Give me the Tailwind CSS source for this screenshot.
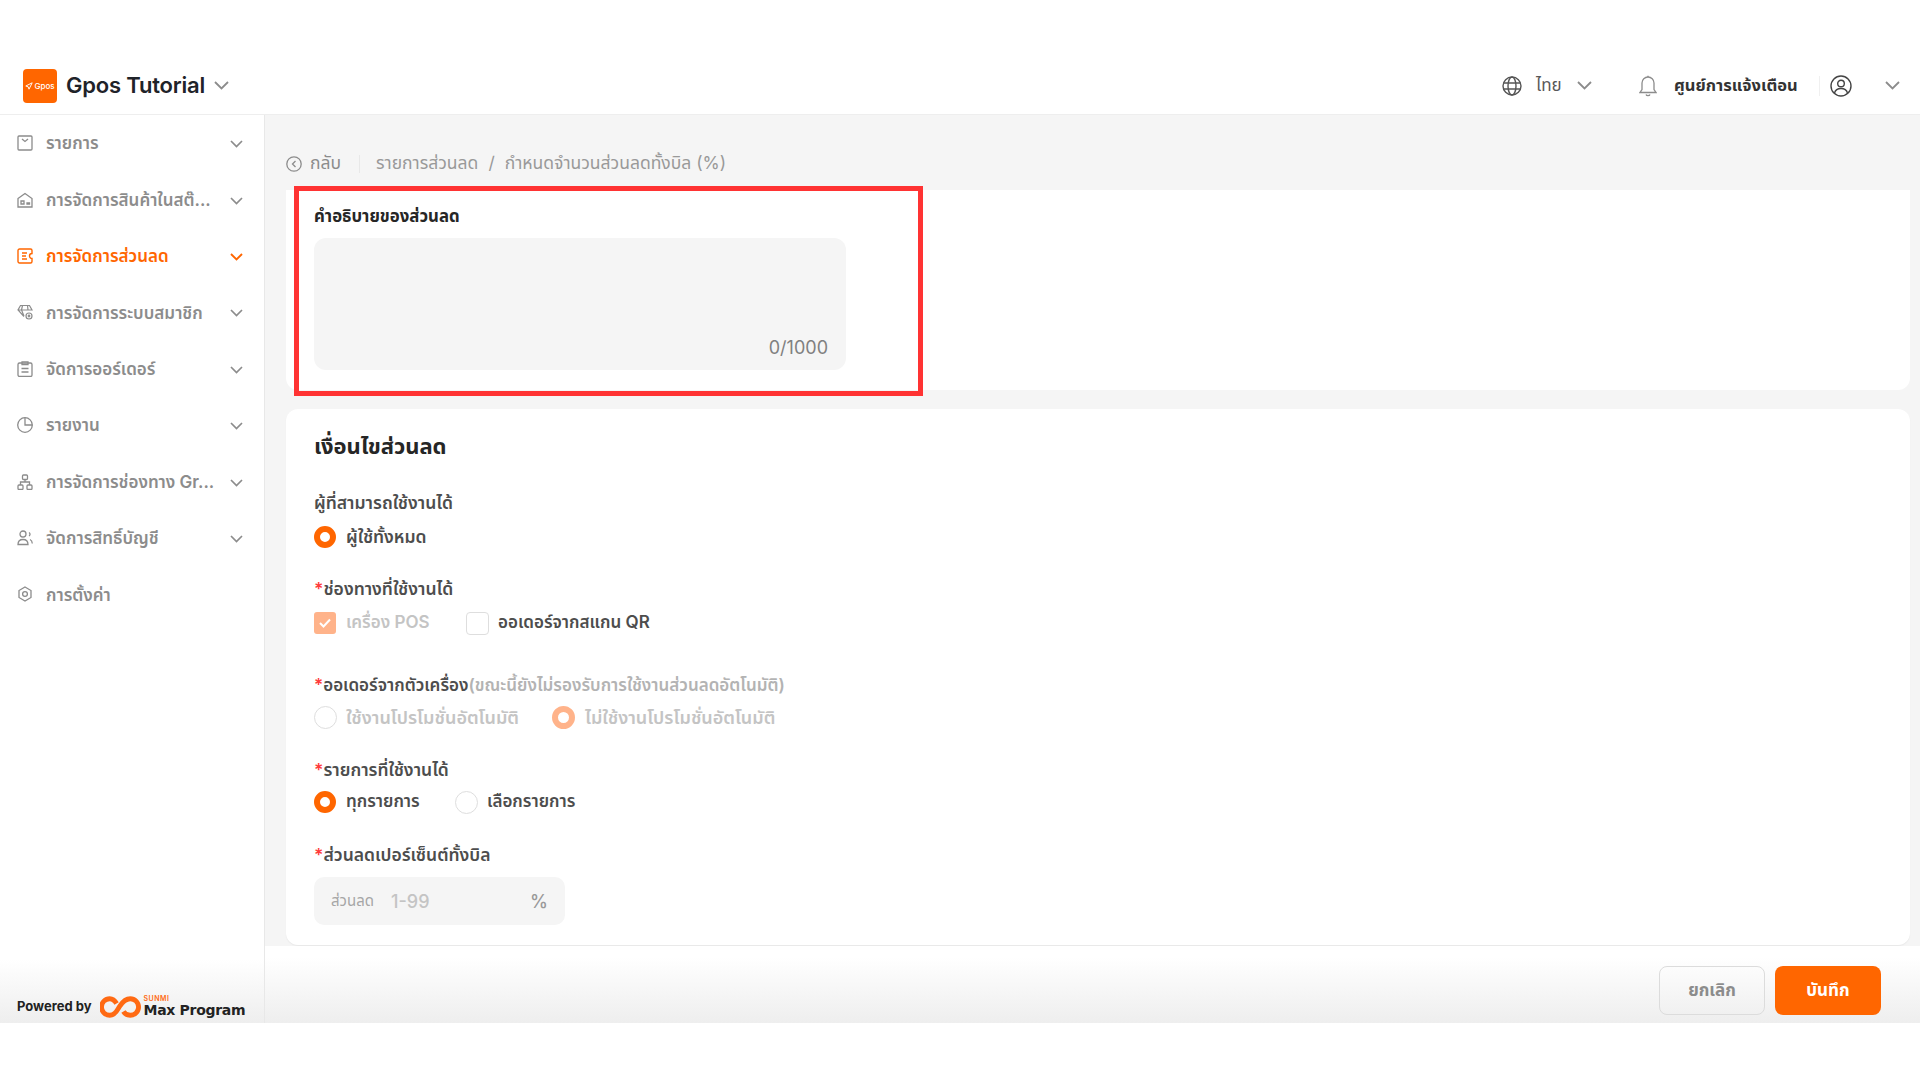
<!DOCTYPE html>
<html lang="th"><head><meta charset="utf-8"><script src="https://cdn.jsdelivr.net/npm/@tailwindcss/browser@4"></script><title>Gpos</title></head>
<body class="bg-white">
<div class="relative w-[1920px] h-[1080px] overflow-hidden bg-white font-['Inter','Noto_Sans','Noto_Sans_Thai',sans-serif] pt-[64px]">
  <!-- header -->
  <header class="h-[51px] flex items-center border-b border-[#eeeeee] pl-[23px] pr-[20px] pb-[7px] bg-white">
    <div class="w-[34px] h-[34px] rounded-[4px] bg-[#ff6600] flex items-center justify-center gap-[1px] text-white text-[8px] font-medium">
      <svg class="w-[8px] h-[8px]" viewBox="0 0 10 10" fill="none" stroke="white" stroke-width="1.2"><path d="M9 1 1 5l3 1 1 3z"/></svg><span>Gpos</span>
    </div>
    <span class="ml-[9px] text-[22px] font-semibold text-[#1f2329] tracking-[-0.2px]">Gpos Tutorial</span>
    <svg class="ml-[9px] w-[15px] h-[9px]" viewBox="0 0 15 9" fill="none" stroke="#8c8c8c" stroke-width="1.8"><path d="m1 1 6.500 6.500L14 1"/></svg>
    <div class="ml-auto flex items-center">
      <svg class="w-[20px] h-[20px]" viewBox="0 0 20 20" fill="none" stroke="#555" stroke-width="1.4"><circle cx="10" cy="10" r="9"/><ellipse cx="10" cy="10" rx="4" ry="9"/><path d="M1.500 7h17M1.500 13h17"/></svg>
      <span class="ml-[14px] text-[17px] text-[#595959] w-[31px] whitespace-nowrap">ไทย</span>
      <svg class="ml-[10px] w-[15px] h-[9px]" viewBox="0 0 15 9" fill="none" stroke="#8c8c8c" stroke-width="1.8"><path d="m1 1 6.500 6.500L14 1"/></svg>
      <svg class="ml-[47px] w-[18px] h-[22px]" viewBox="0 0 18 22" fill="none" stroke="#8c8c8c" stroke-width="1.3"><path d="M1 17.500h16l-2-3V8a6 6 0 0 0-12 0v6.500z"/><path d="M9 .8V2M7 19.500c.5 1.500 3.500 1.500 4 0"/></svg>
      <span class="ml-[17px] text-[16.500px] font-bold text-[#333333] w-[123px] whitespace-nowrap">ศูนย์การแจ้งเตือน</span>
      <span class="ml-[22px] w-px h-[20px] bg-[#f0f0f0]"></span>
      <svg class="ml-[10px] w-[22px] h-[22px]" viewBox="0 0 22 22" fill="none" stroke="#444" stroke-width="1.4"><circle cx="11" cy="11" r="10"/><circle cx="11" cy="8.500" r="3.300"/><path d="M4.500 18c1-3.500 3.500-4.500 6.500-4.500s5.500 1 6.500 4.500"/></svg>
      <svg class="ml-[33px] w-[15px] h-[9px]" viewBox="0 0 15 9" fill="none" stroke="#8c8c8c" stroke-width="1.8"><path d="m1 1 6.500 6.500L14 1"/></svg>
    </div>
  </header>
  <div class="flex h-[908px]">
    <!-- sidebar -->
    <aside class="relative w-[265px] shrink-0 border-r border-[#e8e8e8] bg-gradient-to-b from-white from-[93%] to-[#eeeeee] flex flex-col pt-[1px]">
      <nav class="flex flex-col text-[17px] font-semibold text-[#8c8c8c]">
        <a class="h-[56.400px] flex items-center pl-[17px] pr-[21px]">
          <svg class="w-[16px] h-[16px] mb-[2px]" viewBox="0 0 16 16" fill="none" stroke="currentColor" stroke-width="1.300"><rect x="1" y="1" width="14" height="14" rx="1"/><path d="m5 4 3 2.500L11 4"/></svg>
          <span class="ml-[13px] flex-1 whitespace-nowrap">รายการ</span>
          <svg class="w-[13px] h-[8px]" viewBox="0 0 13 8" fill="none" stroke="currentColor" stroke-width="1.700"><path d="m1 1 5.500 5.500L12 1"/></svg>
        </a>
        <a class="h-[56.400px] flex items-center pl-[17px] pr-[21px]">
          <svg class="w-[16px] h-[16px] mb-[2px]" viewBox="0 0 16 16" fill="none" stroke="currentColor" stroke-width="1.300"><path d="M1 6.500 8 1.500l7 5V15H1z"/><path d="M4 9h3v3H4zM10 11h2.500v1H10z"/></svg>
          <span class="ml-[13px] flex-1 whitespace-nowrap">การจัดการสินค้าในสต๊...</span>
          <svg class="w-[13px] h-[8px]" viewBox="0 0 13 8" fill="none" stroke="currentColor" stroke-width="1.700"><path d="m1 1 5.500 5.500L12 1"/></svg>
        </a>
        <a class="h-[56.400px] flex items-center pl-[17px] pr-[21px] text-[#ff6600]">
          <svg class="w-[16px] h-[16px] mb-[2px]" viewBox="0 0 16 16" fill="none" stroke="currentColor" stroke-width="1.400"><path d="M1 2.500c0-.8.700-1.500 1.500-1.500h11c.8 0 1.500.7 1.500 1.500v3a2.500 2.500 0 0 0 0 5v3c0 .8-.7 1.500-1.500 1.500h-11c-.8 0-1.500-.7-1.500-1.500z"/><path d="M5 5h5M5 8h4M5 11h5"/></svg>
          <span class="ml-[13px] flex-1 whitespace-nowrap">การจัดการส่วนลด</span>
          <svg class="w-[13px] h-[8px]" viewBox="0 0 13 8" fill="none" stroke="currentColor" stroke-width="1.900"><path d="m1 1 5.500 5.500L12 1"/></svg>
        </a>
        <a class="h-[56.400px] flex items-center pl-[17px] pr-[21px]">
          <svg class="w-[16px] h-[16px] mb-[2px]" viewBox="0 0 16 16" fill="none" stroke="currentColor" stroke-width="1.200"><path d="M7 12.500 1 6l2.500-4.500h9L15 6h-4M1 6h10M5.500 1.500 4.500 6 7 12M10.500 1.500 11 6"/><circle cx="12" cy="12" r="3"/><circle cx="12" cy="12" r=".8"/></svg>
          <span class="ml-[13px] flex-1 whitespace-nowrap">การจัดการระบบสมาชิก</span>
          <svg class="w-[13px] h-[8px]" viewBox="0 0 13 8" fill="none" stroke="currentColor" stroke-width="1.700"><path d="m1 1 5.500 5.500L12 1"/></svg>
        </a>
        <a class="h-[56.400px] flex items-center pl-[17px] pr-[21px]">
          <svg class="w-[16px] h-[16px] mb-[2px]" viewBox="0 0 16 16" fill="none" stroke="currentColor" stroke-width="1.300"><rect x="1" y="2" width="14" height="13.500" rx="1.500"/><path d="M5 .8h6V3.500H5zM4.500 7.500h7M4.500 11h7"/></svg>
          <span class="ml-[13px] flex-1 whitespace-nowrap">จัดการออร์เดอร์</span>
          <svg class="w-[13px] h-[8px]" viewBox="0 0 13 8" fill="none" stroke="currentColor" stroke-width="1.700"><path d="m1 1 5.500 5.500L12 1"/></svg>
        </a>
        <a class="h-[56.400px] flex items-center pl-[17px] pr-[21px]">
          <svg class="w-[16px] h-[16px] mb-[2px]" viewBox="0 0 16 16" fill="none" stroke="currentColor" stroke-width="1.300"><circle cx="8" cy="8" r="7.300"/><path d="M8 .7V8h7.300"/></svg>
          <span class="ml-[13px] flex-1 whitespace-nowrap">รายงาน</span>
          <svg class="w-[13px] h-[8px]" viewBox="0 0 13 8" fill="none" stroke="currentColor" stroke-width="1.700"><path d="m1 1 5.500 5.500L12 1"/></svg>
        </a>
        <a class="h-[56.400px] flex items-center pl-[17px] pr-[21px]">
          <svg class="w-[16px] h-[16px] mb-[2px]" viewBox="0 0 16 16" fill="none" stroke="currentColor" stroke-width="1.300"><rect x="5.500" y="1" width="5" height="4.500" rx="1"/><rect x="1" y="11" width="5" height="4.500" rx="1"/><rect x="10" y="11" width="5" height="4.500" rx="1"/><path d="M8 5.500V8M3.500 11V8h9v3"/></svg>
          <span class="ml-[13px] flex-1 whitespace-nowrap">การจัดการช่องทาง Gr...</span>
          <svg class="w-[13px] h-[8px]" viewBox="0 0 13 8" fill="none" stroke="currentColor" stroke-width="1.700"><path d="m1 1 5.500 5.500L12 1"/></svg>
        </a>
        <a class="h-[56.400px] flex items-center pl-[17px] pr-[21px]">
          <svg class="w-[16px] h-[16px] mb-[2px]" viewBox="0 0 16 16" fill="none" stroke="currentColor" stroke-width="1.300"><circle cx="6" cy="4" r="3"/><path d="M1 14.500c0-3.500 2-5 5-5s5 1.500 5 5zM12 2.500a2 2 0 0 1 0 3.500M13 9.500c1.300.6 2.200 1.800 2.300 4"/></svg>
          <span class="ml-[13px] flex-1 whitespace-nowrap">จัดการสิทธิ์บัญชี</span>
          <svg class="w-[13px] h-[8px]" viewBox="0 0 13 8" fill="none" stroke="currentColor" stroke-width="1.700"><path d="m1 1 5.500 5.500L12 1"/></svg>
        </a>
        <a class="h-[56.400px] flex items-center pl-[17px] pr-[21px]">
          <svg class="w-[16px] h-[16px] mb-[2px]" viewBox="0 0 16 16" fill="none" stroke="currentColor" stroke-width="1.300"><path d="M8 1l6 3.500v7L8 15l-6-3.500v-7z"/><circle cx="8" cy="8" r="2.400"/></svg>
          <span class="ml-[13px] flex-1 whitespace-nowrap">การตั้งค่า</span>
        </a>
      </nav>
      <div class="mt-auto h-[32px] pl-[17px] flex items-center">
        <span class="text-[13px] font-bold text-[#222222] font-['Inter',sans-serif]">Powered by</span>
        <svg class="ml-[8px] w-[41px] h-[24px]" viewBox="0 0 42 24" fill="none" stroke="#ff6a13" stroke-width="5"><path d="M17 8.500C15 5 12.500 3.500 10 3.500a8.500 8.500 0 0 0 0 17c6 0 8-6 10-9s5-8 11-8a8.500 8.500 0 0 1 0 17c-3 0-5.500-1.500-7-4"/></svg>
        <div class="ml-[3px] flex flex-col leading-none mt-[-3px]">
          <span class="text-[7px] leading-[8px] font-semibold text-[#ff6a13] tracking-[0.5px]">SUNMI</span>
          <span class="text-[14px] leading-[14px] font-bold text-[#222222] font-['DejaVu_Sans',sans-serif] tracking-[-0.3px] whitespace-nowrap">Max Program</span>
        </div>
      </div>
    </aside>
    <!-- main -->
    <main class="flex-1 min-w-0 bg-[#f5f5f5] flex flex-col">
      <div class="h-[75px] pl-[21px] pr-[10px] flex-none flex items-center pt-[22px] text-[17.500px] text-[#999999]">
        <svg class="w-[16px] h-[16px]" viewBox="0 0 16 16" fill="none" stroke="#8c8c8c" stroke-width="1.300"><circle cx="8" cy="8" r="7.200"/><path d="M9.500 5 6.500 8l3 3"/></svg>
        <span class="ml-[8px] text-[#8c8c8c]">กลับ</span>
        <span class="ml-[18px] w-px h-[18px] bg-[#e8e8e8]"></span>
        <span class="ml-[16px]">รายการส่วนลด</span>
        <span class="ml-[10px]">/</span>
        <span class="ml-[10px]">กำหนดจำนวนส่วนลดทั้งบิล (%)</span>
      </div>
      <div class="pl-[21px] pr-[10px]">
        <section class="h-[200px] bg-white rounded-b-[12px] px-[28px] pt-[14px]">
          <h3 class="h-[24px] leading-[24px] text-[16.800px] font-bold text-[#262626]">คำอธิบายของส่วนลด</h3>
          <div class="mt-[10px] w-[532px] h-[132px] rounded-[12px] bg-[#f5f5f5] flex items-end justify-end px-[18px] py-[10px] text-[18px] leading-[24px] text-[#808080]">0/1000</div>
        </section>
        <section class="mt-[19px] h-[536px] bg-white rounded-[12px] px-[28px] pt-[23px] shadow-[0_1px_1px_#e8e8e8]">
          <h2 class="h-[28px] leading-[28px] text-[22px] font-bold text-[#262626]">เงื่อนไขส่วนลด</h2>
          <div class="mt-[31px] h-[24px] leading-[24px] text-[17.500px] font-semibold text-[#4d4d4d] whitespace-nowrap">ผู้ที่สามารถใช้งานได้</div>
          <div class="mt-[10px] h-[24px] flex items-center text-[17.500px] font-semibold text-[#4d4d4d]">
            <span class="w-[22px] h-[22px] rounded-full border-[6px] border-[#ff6600] bg-white"></span>
            <span class="ml-[10px]">ผู้ใช้ทั้งหมด</span>
          </div>
          <div class="mt-[28px] h-[24px] leading-[24px] text-[17.500px] font-semibold text-[#4d4d4d]"><span class="text-[#ff3b3b]">*</span>ช่องทางที่ใช้งานได้</div>
          <div class="mt-[10px] h-[24px] flex items-center text-[17px] font-semibold">
            <span class="w-[22px] h-[22px] rounded-[3px] bg-[#ffb38a] flex items-center justify-center">
              <svg class="w-[12px] h-[10px]" viewBox="0 0 12 10" fill="none" stroke="white" stroke-width="2"><path d="m1 5 3.500 3.500L11 1.500"/></svg>
            </span>
            <span class="ml-[10px] w-[120px] text-[#c4c4c4] whitespace-nowrap">เครื่อง POS</span>
            <span class="w-[23px] h-[23px] rounded-[4px] border border-[#dedede] bg-white"></span>
            <span class="ml-[9px] text-[#4d4d4d] whitespace-nowrap">ออเดอร์จากสแกน QR</span>
          </div>
          <div class="mt-[38px] h-[24px] leading-[24px] text-[17px] font-semibold text-[#4d4d4d] whitespace-nowrap"><span class="text-[#ff3b3b]">*</span>ออเดอร์จากตัวเครื่อง<span class="text-[#b3b3b3]">(ขณะนี้ยังไม่รองรับการใช้งานส่วนลดอัตโนมัติ)</span></div>
          <div class="mt-[8px] h-[24px] flex items-center text-[18px] font-semibold text-[#c4c4c4]">
            <span class="w-[23px] h-[23px] rounded-full border border-[#dedede] bg-white"></span>
            <span class="ml-[9px] w-[206px] whitespace-nowrap">ใช้งานโปรโมชั่นอัตโนมัติ</span>
            <span class="w-[23px] h-[23px] rounded-full border-[6px] border-[#ffb38a] bg-white"></span>
            <span class="ml-[10px] whitespace-nowrap">ไม่ใช้งานโปรโมชั่นอัตโนมัติ</span>
          </div>
          <div class="mt-[29px] h-[24px] leading-[24px] text-[17.500px] font-semibold text-[#4d4d4d]"><span class="text-[#ff3b3b]">*</span>รายการที่ใช้งานได้</div>
          <div class="mt-[8px] h-[24px] flex items-center text-[17px] font-semibold text-[#4d4d4d]">
            <span class="w-[22px] h-[22px] rounded-full border-[6px] border-[#ff6600] bg-white"></span>
            <span class="ml-[10px] w-[105px] whitespace-nowrap">ทุกรายการ</span>
            <span class="ml-[4px] w-[23px] h-[23px] rounded-full border border-[#dedede] bg-white"></span>
            <span class="ml-[9px]">เลือกรายการ</span>
          </div>
          <div class="mt-[29px] h-[24px] leading-[24px] text-[17.500px] font-semibold text-[#4d4d4d]"><span class="text-[#ff3b3b]">*</span>ส่วนลดเปอร์เซ็นต์ทั้งบิล</div>
          <div class="mt-[10px] w-[251px] h-[48px] rounded-[10px] bg-[#f5f5f5] flex items-center pl-[17px] pr-[17px]">
            <span class="text-[15px] text-[#a6a6a6] w-[60px]">ส่วนลด</span>
            <span class="text-[18px] font-medium text-[#c4c4c4]">1-99</span>
            <span class="ml-auto text-[18px] font-medium text-[#999999]">%</span>
          </div>
        </section>
      </div>
      <div class="mt-auto h-[77px] bg-gradient-to-b from-white from-[15%] to-[#eeeeee] flex items-start justify-end pt-[20px] pr-[39px] gap-[10px]">
        <button class="w-[106px] h-[49px] rounded-[8px] border border-[#dcdcdc] text-[17px] font-bold text-[#8c8c8c]">ยกเลิก</button>
        <button class="w-[106px] h-[49px] rounded-[8px] bg-[#ff6600] text-[17px] font-bold text-white">บันทึก</button>
      </div>
    </main>
  </div>
  <!-- annotation -->
  <div class="absolute left-[294px] top-[186px] w-[629px] h-[210px] border-[5px] border-[#ff3333] pointer-events-none"></div>
</div>
</body></html>
